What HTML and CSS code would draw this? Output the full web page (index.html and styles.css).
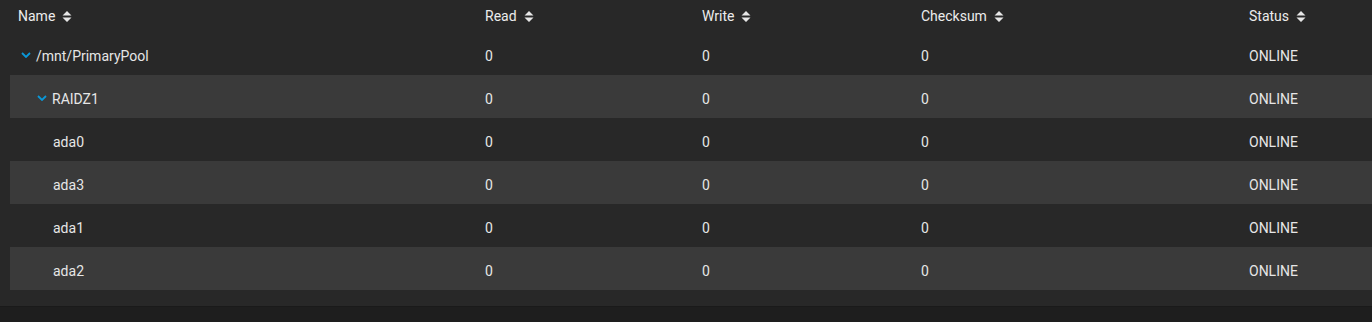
FILE: index.html
```html
<!DOCTYPE html>
<html>
<head>
<meta charset="utf-8">
<link rel="stylesheet" href="styles.css">
</head>
<body>
<div class="panel">
  <div class="table">
    <div class="row head">
      <div class="cell name-h">Name <svg class="sort" viewBox="0 0 10 11"><path d="M5 0 L9.5 4.5 H0.5 Z M5 11 L9.5 6.5 H0.5 Z"/></svg></div>
      <div class="cell">Read <svg class="sort" viewBox="0 0 10 11"><path d="M5 0 L9.5 4.5 H0.5 Z M5 11 L9.5 6.5 H0.5 Z"/></svg></div>
      <div class="cell">Write <svg class="sort" viewBox="0 0 10 11"><path d="M5 0 L9.5 4.5 H0.5 Z M5 11 L9.5 6.5 H0.5 Z"/></svg></div>
      <div class="cell">Checksum <svg class="sort" viewBox="0 0 10 11"><path d="M5 0 L9.5 4.5 H0.5 Z M5 11 L9.5 6.5 H0.5 Z"/></svg></div>
      <div class="cell">Status <svg class="sort" viewBox="0 0 10 11"><path d="M5 0 L9.5 4.5 H0.5 Z M5 11 L9.5 6.5 H0.5 Z"/></svg></div>
    </div>
    <div class="row">
      <div class="cell name lvl0"><span class="toggle"><svg viewBox="0 0 10 6"><polyline points="1,1 5,5 9,1"/></svg></span>/mnt/PrimaryPool</div>
      <div class="cell">0</div><div class="cell">0</div><div class="cell">0</div><div class="cell">ONLINE</div>
    </div>
    <div class="row alt">
      <div class="cell name lvl1"><span class="toggle"><svg viewBox="0 0 10 6"><polyline points="1,1 5,5 9,1"/></svg></span>RAIDZ1</div>
      <div class="cell">0</div><div class="cell">0</div><div class="cell">0</div><div class="cell">ONLINE</div>
    </div>
    <div class="row">
      <div class="cell name leaf">ada0</div>
      <div class="cell">0</div><div class="cell">0</div><div class="cell">0</div><div class="cell">ONLINE</div>
    </div>
    <div class="row alt">
      <div class="cell name leaf">ada3</div>
      <div class="cell">0</div><div class="cell">0</div><div class="cell">0</div><div class="cell">ONLINE</div>
    </div>
    <div class="row">
      <div class="cell name leaf">ada1</div>
      <div class="cell">0</div><div class="cell">0</div><div class="cell">0</div><div class="cell">ONLINE</div>
    </div>
    <div class="row alt">
      <div class="cell name leaf">ada2</div>
      <div class="cell">0</div><div class="cell">0</div><div class="cell">0</div><div class="cell">ONLINE</div>
    </div>
  </div>
</div>
<div class="footer"></div>
</body>
</html>
```

FILE: styles.css
```css
html, body {
  margin: 0;
  padding: 0;
  background: #1e1e1e;
  font-family: Roboto, "Liberation Sans", sans-serif;
  font-size: 14px;
  color: #e6e6e6;
}
.panel {
  background: #282828;
  padding: 0 0 16px 10px;
  height: 290px;
  border-bottom: 1px solid #1a1a1a;
}
.table {
  display: flex;
  flex-direction: column;
}
.row {
  display: grid;
  grid-template-columns: 467px 217px 219px 328px 1fr;
  height: 43px;
  align-items: center;
  padding-top: 5px;
  box-sizing: border-box;
}
.row.head {
  height: 32px;
  padding-top: 0;
  font-weight: 400;
  color: #ececec;
}
.row.alt {
  background: #3a3a3a;
}
.cell {
  padding-left: 8px;
  white-space: nowrap;
  display: flex;
  align-items: center;
}
.sort {
  width: 10px;
  height: 11px;
  margin-left: 7px;
  fill: #e6e6e6;
}
.toggle {
  width: 18px;
  display: inline-flex;
  align-items: center;
}
.toggle svg {
  width: 10px;
  height: 6px;
  margin-left: 3px;
  margin-top: -2px;
  fill: none;
  stroke: #0a98d8;
  stroke-width: 1.8;
}
.lvl1 {
  padding-left: 24px;
}
.leaf {
  padding-left: 43px;
}
.footer {
  height: 15px;
}
```
